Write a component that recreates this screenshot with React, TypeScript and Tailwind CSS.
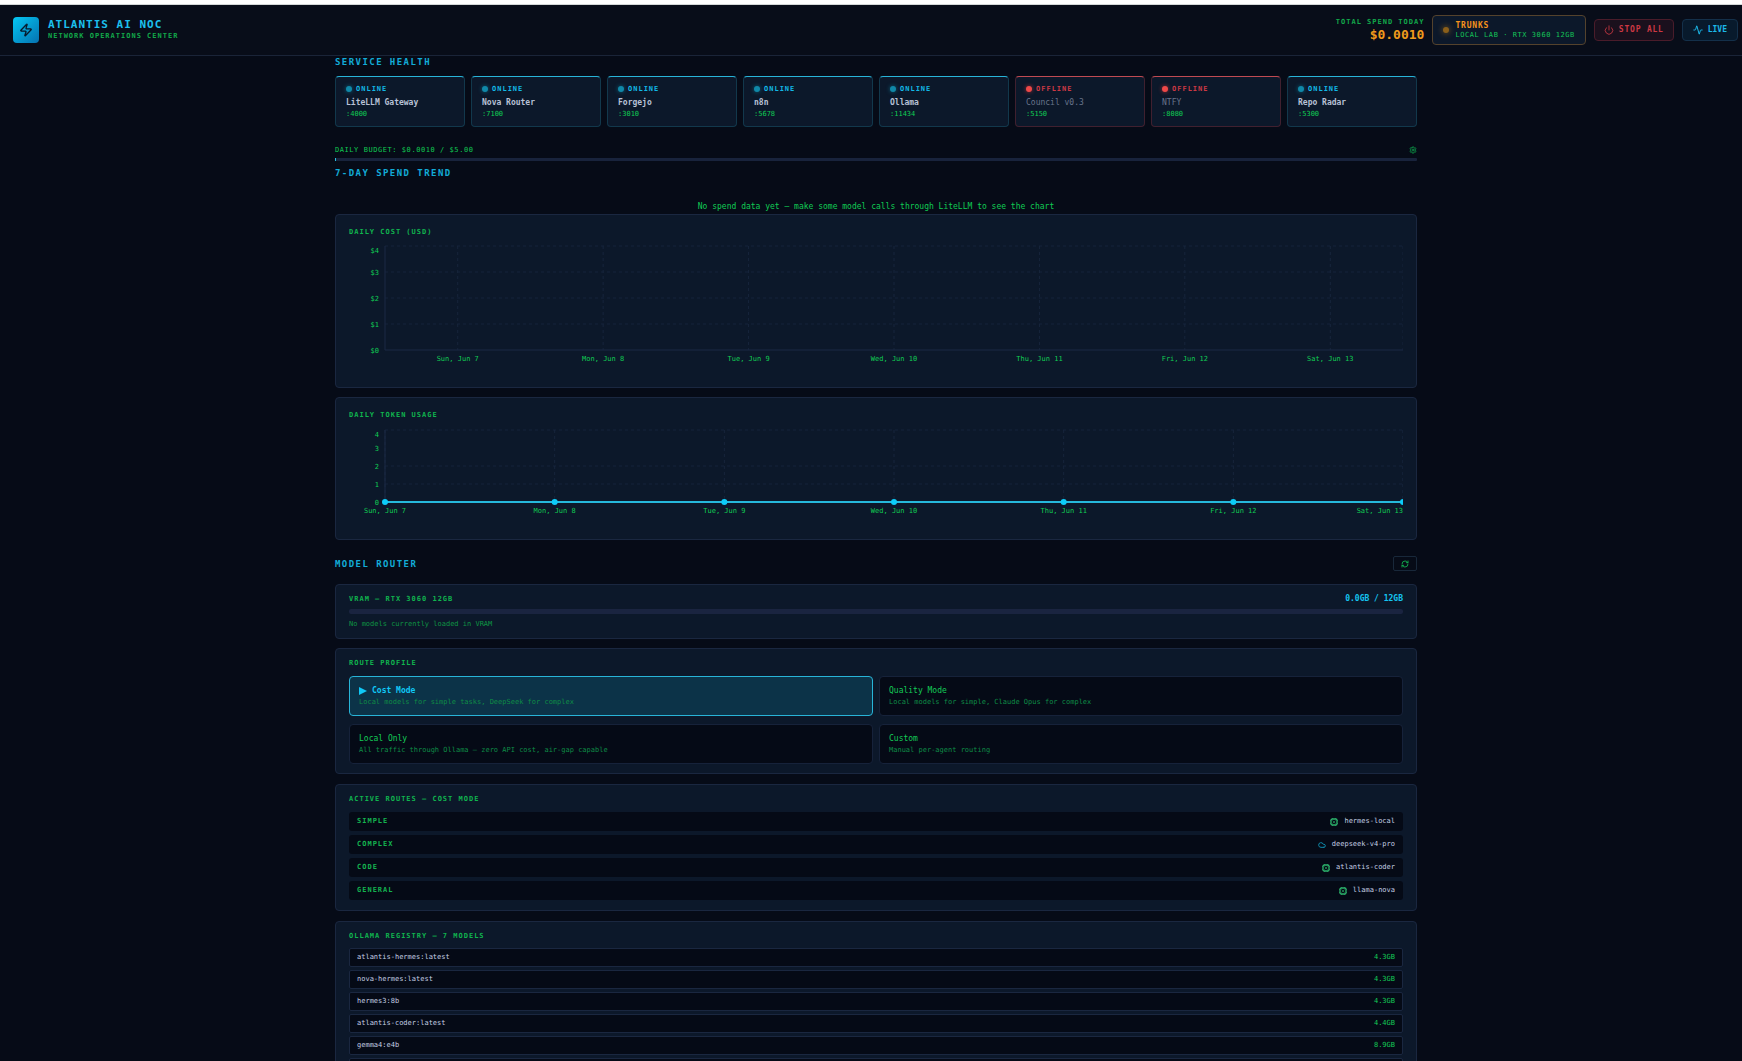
import React from "react";
import { Activity, Cloud, Power, RefreshCw, Settings, Zap } from "lucide-react";

const services = [
  { name: "LiteLLM Gateway", port: ":4000", online: true },
  { name: "Nova Router", port: ":7100", online: true },
  { name: "Forgejo", port: ":3010", online: true },
  { name: "n8n", port: ":5678", online: true },
  { name: "Ollama", port: ":11434", online: true },
  { name: "Council v0.3", port: ":5150", online: false },
  { name: "NTFY", port: ":8080", online: false },
  { name: "Repo Radar", port: ":5300", online: true },
];

const days = ["Sun, Jun 7", "Mon, Jun 8", "Tue, Jun 9", "Wed, Jun 10", "Thu, Jun 11", "Fri, Jun 12", "Sat, Jun 13"];

const profiles = [
  { name: "Cost Mode", text: "Local models for simple tasks, DeepSeek for complex", active: true },
  { name: "Quality Mode", text: "Local models for simple, Claude Opus for complex", active: false },
  { name: "Local Only", text: "All traffic through Ollama — zero API cost, air-gap capable", active: false },
  { name: "Custom", text: "Manual per-agent routing", active: false },
];

const routes = [
  { kind: "SIMPLE", model: "hermes-local", cloud: false },
  { kind: "COMPLEX", model: "deepseek-v4-pro", cloud: true },
  { kind: "CODE", model: "atlantis-coder", cloud: false },
  { kind: "GENERAL", model: "llama-nova", cloud: false },
];

const registry = [
  ["atlantis-hermes:latest", "4.3GB"],
  ["nova-hermes:latest", "4.3GB"],
  ["hermes3:8b", "4.3GB"],
  ["atlantis-coder:latest", "4.4GB"],
  ["gemma4:e4b", "8.9GB"],
  ["llama-nova:latest", "4.6GB"],
  ["llama3.1:8b", "4.6GB"],
];

function ChipIcon() {
  return (
    <svg width="8" height="8" viewBox="0 0 16 16" fill="none" stroke="currentColor" aria-hidden="true" className="text-[#2cb46c]">
      <rect x="2" y="2" width="12" height="12" rx="2.5" strokeWidth="2.6" />
      <path d="M5 5L11 11M11 5L5 11" strokeWidth="1.2" />
      <path d="M5 0V2M11 0V2M5 14V16M11 14V16M0 5H2M0 11H2M14 5H16M14 11H16" strokeWidth="1" />
    </svg>
  );
}

function SectionTitle({ children }: { children: React.ReactNode }) {
  return <h2 className="text-[9px] leading-3 font-bold tracking-[0.16em] text-[#12acd8]">{children}</h2>;
}

function PanelTitle({ children }: { children: React.ReactNode }) {
  return <h3 className="text-[7px] leading-3 font-bold tracking-[1px] text-[#10b44e]">{children}</h3>;
}

function Panel({ className, children }: { className: string; children: React.ReactNode }) {
  return (
    <section className={"rounded-[4px] border border-[#1a2740] bg-[#0c182a] px-[13px] " + className}>{children}</section>
  );
}

type ChartProps = {
  height: number;
  top: number;
  step: number;
  prefix: string;
  hiddenLine?: number;
  points: number[];
  dots?: boolean;
};

function Chart({ height, top, step, prefix, hiddenLine, points, dots }: ChartProps) {
  const bottom = top + step * 4;
  const values = [4, 3, 2, 1, 0];
  return (
    <div className="flex overflow-hidden" style={{ height }}>
      <svg className="h-full w-9 shrink-0" aria-hidden="true">
        {values.map((v) => (
          <text
            key={v}
            x={30}
            y={bottom - v * step + (v === 4 ? 7 : 3)}
            textAnchor="end"
            className="fill-[#10cc54] text-[7px]"
          >
            {prefix + v}
          </text>
        ))}
      </svg>
      <svg className="h-full min-w-0 flex-1 overflow-visible">
        {values
          .filter((v) => v !== hiddenLine && v !== 0)
          .map((v) => (
            <line
              key={v}
              x1="0"
              x2="100%"
              y1={bottom - v * step}
              y2={bottom - v * step}
              className="stroke-[#14223a]"
              strokeDasharray="3 3"
            />
          ))}
        {points.map((p, i) => (
          <line key={i} x1={p + "%"} x2={p + "%"} y1={top} y2={bottom} className="stroke-[#17253c]" strokeDasharray="3 3" />
        ))}
        <line x1="100%" x2="100%" y1={top} y2={bottom} className="stroke-[#14223a]" strokeDasharray="3 3" />
        <line x1="0" x2="0" y1={top} y2={bottom} className="stroke-[#1a2844]" />
        <line x1="0" x2="100%" y1={bottom} y2={bottom} className="stroke-[#1a2844]" />
        {dots && <line x1="0" x2="100%" y1={bottom} y2={bottom} strokeWidth="2" className="stroke-[#26b8dc]" />}
        {dots && points.map((p, i) => <circle key={i} cx={p + "%"} cy={bottom} r="3" className="fill-[#0cccf8]" />)}
        {points.map((p, i) => (
          <text
            key={i}
            x={p + "%"}
            y={bottom + 11}
            textAnchor={p === 100 ? "end" : "middle"}
            className="fill-[#10cc54] text-[7px]"
          >
            {days[i]}
          </text>
        ))}
      </svg>
    </div>
  );
}

export default function App() {
  return (
    <div className="h-screen overflow-hidden bg-[#060b17] font-['DejaVu_Sans_Mono',monospace] text-[#c4cfe4]">
      <div className="h-[5px] border-b border-[#d4d8d8] bg-white" />
      <header className="flex h-[51px] items-center justify-between border-b border-[#1a2438] bg-[#080d19] pr-1 pl-[13px]">
        <div className="flex items-center gap-[9px]">
          <div className="flex size-[26px] items-center justify-center rounded-[4px] bg-linear-to-br from-[#06c8f4] to-[#0672b0] text-[#07182a]">
            <Zap size={14} strokeWidth={2.2} />
          </div>
          <div>
            <h1 className="text-[11px] leading-3 font-bold tracking-[1px] text-[#1cc0ee]">ATLANTIS AI NOC</h1>
            <p className="text-[7px] leading-[10px] font-bold tracking-[1px] text-[#12a84a]">NETWORK OPERATIONS CENTER</p>
          </div>
        </div>
        <div className="flex items-center gap-2">
          <div className="text-right">
            <p className="text-[7px] leading-[10px] font-bold tracking-[1px] text-[#12a84a]">TOTAL SPEND TODAY</p>
            <p className="text-[13px] leading-4 font-bold text-[#f09a1c]">$0.0010</p>
          </div>
          <button className="flex h-[30px] items-center gap-[6px] rounded-[4px] border border-[#54422c] bg-[#0c182a] px-[10px] text-left">
            <span className="size-[6px] rounded-full bg-[#8a5f1a] shadow-[0_0_6px_#96661a]" />
            <span>
              <span className="block text-[8px] leading-[10px] font-bold tracking-widest text-[#f5921c]">TRUNKS</span>
              <span className="block text-[7px] leading-[9px] tracking-[0.08em] text-[#14c458]">
                LOCAL LAB · RTX 3060 12GB
              </span>
            </span>
          </button>
          <button className="flex h-[22px] items-center gap-[5px] rounded-[4px] border border-[#4a1c2a] bg-[#1a101d] px-[9px] text-[8px] font-bold tracking-widest text-[#cc3843]">
            <Power size={10} />
            STOP ALL
          </button>
          <button className="flex h-[22px] items-center gap-[5px] rounded-[4px] border border-[#14304a] bg-[#081a2c] px-[10px] text-[8px] font-bold text-[#1cb8e8]">
            <Activity size={10} strokeWidth={2.4} />
            LIVE
          </button>
        </div>
      </header>

      <div className="pl-[10px]">
        <main className="mx-auto max-w-[1082px]">
          <SectionTitle>SERVICE HEALTH</SectionTitle>
          <div className="mt-2 grid grid-cols-8 gap-[6px]">
            {services.map((s) => (
              <div
                key={s.name}
                className={
                  "rounded-[4px] border bg-[#0c182a] px-[10px] pt-[7px] pb-[7px] " +
                  (s.online ? "border-[#12384c] border-t-[#28b4d8]" : "border-[#40202f] border-t-[#c04a52]")
                }
              >
                <div
                  className={
                    "flex items-center gap-1 text-[7px] leading-[10px] font-bold tracking-[1px] " +
                    (s.online ? "text-[#12b8e6]" : "text-[#cc3844]")
                  }
                >
                  <span
                    className={
                      "size-[6px] rounded-full " +
                      (s.online ? "bg-[#1088a8] shadow-[0_0_4px_#0c6480]" : "bg-[#ee4848] shadow-[0_0_4px_#a03038]")
                    }
                  />
                  {s.online ? "ONLINE" : "OFFLINE"}
                </div>
                <p
                  className={
                    "mt-[3px] text-[8px] leading-3 whitespace-nowrap " +
                    (s.online ? "font-bold text-[#b8c1d6]" : "text-[#68748a]")
                  }
                >
                  {s.name}
                </p>
                <p className="text-[7px] leading-[10px] text-[#10cc54]">{s.port}</p>
              </div>
            ))}
          </div>

          <div className="mt-[17px] flex h-3 items-center justify-between">
            <p className="text-[7px] leading-3 tracking-[0.08em] text-[#10c852]">DAILY BUDGET: $0.0010 / $5.00</p>
            <button aria-label="Budget settings" className="text-[#0c8c44]">
              <Settings size={8} strokeWidth={3} />
            </button>
          </div>
          <div className="mt-[2px] h-[3px] rounded-[1px] bg-[#18233c]">
            <div className="h-full w-px bg-[#28c0e0]" />
          </div>

          <div className="mt-[6px]">
            <SectionTitle>7-DAY SPEND TREND</SectionTitle>
          </div>
          <p className="mt-[22px] text-center text-[8px] leading-3 text-[#10cc54]">
            No spend data yet — make some model calls through LiteLLM to see the chart
          </p>
          <Panel className="mt-px pt-[11px] pb-[13px]">
            <PanelTitle>DAILY COST (USD)</PanelTitle>
            <Chart
              height={136}
              top={8}
              step={26}
              prefix="$"
              points={days.map((_, i) => ((i + 0.5) * 100) / 7)}
            />
          </Panel>
          <Panel className="mt-[9px] pt-[11px] pb-[13px]">
            <PanelTitle>DAILY TOKEN USAGE</PanelTitle>
            <Chart height={105} top={9} step={18} prefix="" hiddenLine={3} points={days.map((_, i) => (i * 100) / 6)} dots />
          </Panel>

          <div className="mt-4 flex items-center justify-between">
            <SectionTitle>MODEL ROUTER</SectionTitle>
            <button
              aria-label="Refresh"
              className="flex h-[15px] w-6 items-center justify-center rounded-[2px] border border-[#18283a] text-[#12b450]"
            >
              <RefreshCw size={8} strokeWidth={2.6} />
            </button>
          </div>

          <Panel className="mt-[13px] pt-2 pb-[9px]">
            <div className="flex items-center justify-between">
              <PanelTitle>VRAM — RTX 3060 12GB</PanelTitle>
              <p className="text-[8px] leading-3 font-bold text-[#14c4f0]">0.0GB / 12GB</p>
            </div>
            <div className="mt-1 h-[5px] rounded-[2px] bg-[#1a2440]" />
            <p className="mt-[5px] text-[7px] leading-[10px] text-[#0e9444]">No models currently loaded in VRAM</p>
          </Panel>

          <Panel className="mt-[9px] pt-2 pb-[9px]">
            <PanelTitle>ROUTE PROFILE</PanelTitle>
            <div className="mt-[7px] grid grid-cols-2 gap-x-[6px] gap-y-2">
              {profiles.map((p) => (
                <button
                  key={p.name}
                  className={
                    "flex h-10 flex-col justify-center rounded-[4px] border px-[9px] text-left " +
                    (p.active ? "border-[#28b4d8] bg-[#0c3348]" : "border-[#16223a] bg-[#050a16]")
                  }
                >
                  <span
                    className={
                      "flex items-center gap-[5px] text-[8px] leading-3 " +
                      (p.active ? "font-bold text-[#10c8f6]" : "text-[#14cc56]")
                    }
                  >
                    {p.active && (
                      <svg width="8" height="8" viewBox="0 0 8 8" aria-hidden="true">
                        <path d="M0 0L8 4L0 8Z" fill="currentColor" />
                      </svg>
                    )}
                    {p.name}
                  </span>
                  <span className="text-[7px] leading-[10px] text-[#0e8c46]">{p.text}</span>
                </button>
              ))}
            </div>
          </Panel>

          <Panel className="mt-[10px] pt-2 pb-[10px]">
            <PanelTitle>ACTIVE ROUTES — COST MODE</PanelTitle>
            <ul className="mt-[7px] flex flex-col gap-1">
              {routes.map((r) => (
                <li key={r.kind} className="flex h-[19px] items-center justify-between rounded-[3px] bg-[#050a16] px-2">
                  <span className="text-[7px] font-bold tracking-[1px] text-[#14b450]">{r.kind}</span>
                  <span className="flex items-center gap-[6px] text-[7px]">
                    {r.cloud ? <Cloud size={8} strokeWidth={3} className="text-[#1088a8]" /> : <ChipIcon />}
                    {r.model}
                  </span>
                </li>
              ))}
            </ul>
          </Panel>

          <Panel className="mt-[10px] pt-2 pb-[10px]">
            <PanelTitle>OLLAMA REGISTRY — 7 MODELS</PanelTitle>
            <ul className="mt-[6px] flex flex-col gap-[3px]">
              {registry.map(([name, size]) => (
                <li
                  key={name}
                  className="flex h-[19px] items-center justify-between rounded-[2px] border border-[#1a2740] bg-[#050a16] px-[7px] text-[7px]"
                >
                  <span>{name}</span>
                  <span className="text-[#14cc56]">{size}</span>
                </li>
              ))}
            </ul>
          </Panel>
        </main>
      </div>
    </div>
  );
}
